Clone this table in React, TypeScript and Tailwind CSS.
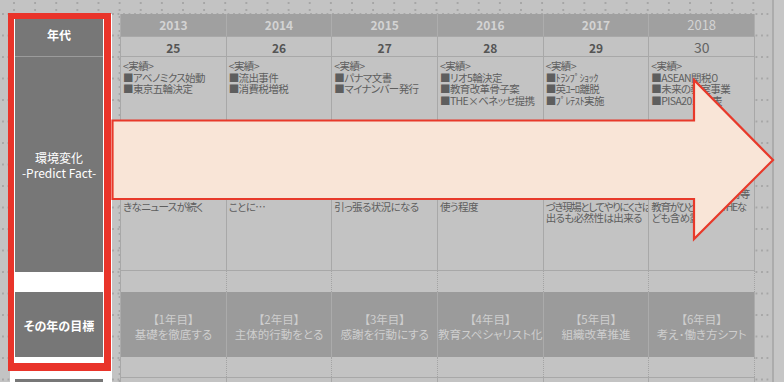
const cols = [
  {
    year: '2013',
    no: '25',
    top: ['<実績>', '■アベノミクス始動', '■東京五輪決定'],
    bottom: ['政治経済ともに大', 'きなニュースが続く'],
    goal: ['【1年目】', '基礎を徹底する'],
  },
  {
    year: '2014',
    no: '26',
    top: ['<実績>', '■流出事件', '■消費税増税'],
    bottom: ['信頼を取り戻す', 'ことに…'],
    goal: ['【2年目】', '主体的行動をとる'],
  },
  {
    year: '2015',
    no: '27',
    top: ['<実績>', '■パナマ文書', '■マイナンバー発行'],
    bottom: ['世界の動きが日本を', '引っ張る状況になる'],
    goal: ['【3年目】', '感謝を行動にする'],
  },
  {
    year: '2016',
    no: '28',
    top: ['<実績>', '■リオ5輪決定', '■教育改革骨子案', '■THE×ベネッセ提携'],
    bottom: ['ツールとして', '使う程度'],
    goal: ['【4年目】', '教育スペシャリスト化'],
  },
  {
    year: '2017',
    no: '29',
    top: ['<実績>', '■ﾄﾗﾝﾌﾟｼｮｯｸ', '■英ﾕｰﾛ離脱', '■ﾌﾟﾚﾃｽﾄ実施'],
    bottom: ['改革の方針に基', 'づき現場としてやりにくさは', '出るも必然性は出来る'],
    goal: ['【5年目】', '組織改革推進'],
  },
  {
    year: '2018',
    no: '30',
    top: ['<実績>', '■ASEAN関税０', '■未来の教室事業', '■PISA2018発表'],
    bottom: ['大学入試改革では高等', '教育がひどい中でTHEな', 'ども含め露出'],
    goal: ['【6年目】', '考え･働き方シフト'],
    plain: true,
  },
]

export default function App() {
  return (
    <div className="relative w-[784px] h-[382px] overflow-hidden bg-[#c3c3c3] bg-[image:radial-gradient(circle_at_1px_1px,#a5a5a5_0.7px,transparent_1px),radial-gradient(circle_at_1px_1px,#a5a5a5_0.7px,transparent_1px)] bg-[size:21.13px_7px,5.5px_21.5px] bg-[position:13px_2px,2px_13px] font-['Noto_Sans_CJK_JP','Noto_Sans',sans-serif] [font-feature-settings:'palt']">
      <div className="flex h-full pt-[14px]">
        <div className="w-[10px] shrink-0" />

        {/* left label column */}
        <div className="w-[102px] shrink-0 bg-white flex flex-col pl-[5px] pr-[9px]">
          <div className="h-[43px] bg-[#777777] border-b border-[#9b9b9b] flex items-center justify-center text-[12px] font-bold text-white">
            年代
          </div>
          <div className="h-[215px] bg-[#777777] flex flex-col items-center justify-center text-[12px] leading-[15px] text-white">
            <div>環境変化</div>
            <div>-Predict Fact-</div>
          </div>
          <div className="h-[20px]" />
          <div className="h-[65px] bg-[#777777] flex items-center justify-center pt-[2px] text-[12px] font-bold text-white">
            その年の目標
          </div>
          <div className="h-[22px]" />
          <div className="flex-1 bg-[#777777]" />
        </div>

        <div className="w-[8px] shrink-0" />

        {/* year table */}
        <div className="w-[635px] shrink-0 flex flex-col">
          <div className="grid grid-cols-6 h-[22px] bg-[#a0a0a0] border-l border-[#acacac]">
            {cols.map((c) => (
              <div
                key={c.year}
                className={`flex items-center justify-center border-r border-[#adadad] text-[#d3d3d3] ${c.plain ? 'text-[13px] font-normal' : 'text-[12px] font-bold'}`}
              >
                {c.year}
              </div>
            ))}
          </div>
          <div className="grid grid-cols-6 h-[21px] bg-[#c3c3c3] border-l border-y border-[#a8a8a8]">
            {cols.map((c) => (
              <div
                key={c.year}
                className={`flex items-center justify-center border-r border-[#a8a8a8] ${c.plain ? 'text-[14px] font-normal text-[#636363]' : 'text-[12px] font-bold text-[#555555]'}`}
              >
                {c.no}
              </div>
            ))}
          </div>
          <div className="grid grid-cols-6 h-[214px] bg-[#c3c3c3] border-l border-b border-[#a8a8a8]">
            {cols.map((c) => (
              <div
                key={c.year}
                className="flex flex-col overflow-hidden border-r border-[#a8a8a8] pl-[2px] pt-[3px] text-[10.5px] leading-[11.5px] tracking-[-0.6px] text-[#5e5e5e]"
              >
                <div className="h-[129px] shrink-0">
                  {c.top.map((l) => (
                    <div key={l} className="whitespace-nowrap">
                      {l}
                    </div>
                  ))}
                </div>
                <div className="whitespace-nowrap leading-[10px]">{c.bottom[0]}</div>
                <div className="pt-[2px] leading-[11px]">
                  {c.bottom.slice(1).map((l) => (
                    <div
                      key={l}
                      className={`whitespace-nowrap ${l.length > 11 ? 'tracking-[-1.4px]' : ''}`}
                    >
                      {l}
                    </div>
                  ))}
                </div>
              </div>
            ))}
          </div>
          <div className="grid grid-cols-6 h-[21px] bg-[#c3c3c3] border-l border-[#a8a8a8]">
            {cols.map((c) => (
              <div key={c.year} className="border-r border-dotted border-[#a3a3a3]" />
            ))}
          </div>
          <div className="grid grid-cols-6 h-[65px] bg-[#9b9b9b] border-l border-[#ababab]">
            {cols.map((c) => (
              <div
                key={c.year}
                className="flex flex-col items-center justify-center pt-[4px] border-r border-[#ababab] text-[11.5px] leading-[15px] text-[#cecece] whitespace-nowrap"
              >
                <div>{c.goal[0]}</div>
                <div>{c.goal[1]}</div>
              </div>
            ))}
          </div>
          <div className="grid grid-cols-6 h-[21px] bg-[#c3c3c3] border-l border-b border-[#a8a8a8]">
            {cols.map((c) => (
              <div key={c.year} className="border-r border-dotted border-[#a3a3a3]" />
            ))}
          </div>
          <div className="grid grid-cols-6 flex-1 bg-[#c3c3c3] border-l border-[#a8a8a8]">
            {cols.map((c) => (
              <div key={c.year} className="border-r border-[#a8a8a8]" />
            ))}
          </div>
        </div>

        <div className="w-[17px] shrink-0" />
        <div className="w-[2px] shrink-0 -mt-[14px] bg-[#acacac]" />
        <div className="flex-1 -mt-[14px] bg-[#c6c6c6]" />
      </div>

      {/* highlight frame */}
      <div className="absolute left-[8px] top-[13px] w-[103px] h-[358px] border-l-[6px] border-r-[7px] border-t-[6px] border-b-[8px] border-[#e9342a]" />

      {/* arrow */}
      <svg className="absolute left-0 top-0" width="784" height="382" viewBox="0 0 784 382">
        <polygon
          points="112.5,120.5 694,120.5 694,80 773,160 694,239 694,199 112.5,199"
          fill="#f9e5d7"
          stroke="#e8392a"
          strokeWidth="2.2"
          strokeLinejoin="miter"
        />
      </svg>
    </div>
  )
}
